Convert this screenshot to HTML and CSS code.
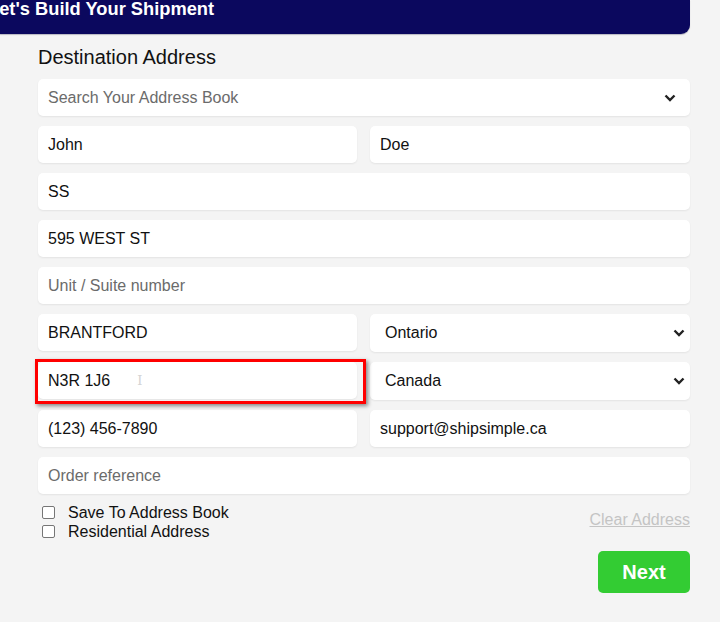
FILE: index.html
```html
<!DOCTYPE html>
<html lang="en">
<head>
    <meta charset="UTF-8">
    <title>Build Your Shipment</title>
    <link rel="stylesheet" href="styles.css">
</head>
<body>
    <div class="topbar">
        <h3 class="topbar-title">Let's Build Your Shipment</h3>
    </div>

    <form class="address-form">
        <h4 class="form-title">Destination Address</h4>

        <div class="field select-field">
            <span class="placeholder">Search Your Address Book</span>
            <svg class="chev" width="12" height="8" viewBox="0 0 12 8"><path d="M1.5 1.5 6 6l4.5-4.5" fill="none" stroke="#222" stroke-width="2.4"/></svg>
        </div>

        <div class="row">
            <div class="field">John</div>
            <div class="field">Doe</div>
        </div>
        <div class="field">SS</div>
        <div class="field">595 WEST ST</div>
        <div class="field placeholder">Unit / Suite number</div>

        <div class="row">
            <div class="field">BRANTFORD</div>
            <div class="field select-field pick">
                <span>Ontario</span>
                <svg class="chev" width="12" height="8" viewBox="0 0 12 8"><path d="M1.5 1.5 6 6l4.5-4.5" fill="none" stroke="#222" stroke-width="2.4"/></svg>
            </div>
        </div>
        <div class="row">
            <div class="field marked">N3R 1J6<span class="ibeam">I</span></div>
            <div class="field select-field pick">
                <span>Canada</span>
                <svg class="chev" width="12" height="8" viewBox="0 0 12 8"><path d="M1.5 1.5 6 6l4.5-4.5" fill="none" stroke="#222" stroke-width="2.4"/></svg>
            </div>
        </div>
        <div class="row">
            <div class="field">(123) 456-7890</div>
            <div class="field">support@shipsimple.ca</div>
        </div>
        <div class="field placeholder">Order reference</div>

        <div class="options">
            <div class="checks">
                <label class="check"><span class="box"></span>Save To Address Book</label>
                <label class="check"><span class="box"></span>Residential Address</label>
            </div>
            <a class="clear-link" href="#">Clear Address</a>
        </div>

        <div class="actions">
            <button type="button" class="next-btn">Next</button>
        </div>
    </form>
</body>
</html>
```

FILE: styles.css
```css
body, html {
    margin: 0;
    height: 100%;
    background-color: #f4f4f4;
    font-family: "Liberation Sans", Arial, sans-serif;
    color: #111;
}
.topbar {
    width: 690px;
    height: 34px;
    background-color: #0b085e;
    border-bottom-right-radius: 9px;
    box-shadow: 0 1px 1px rgba(0, 0, 40, 0.25);
    overflow: hidden;
}
.topbar-title {
    margin: 0 0 0 -12px;
    font-size: 18.3px;
    line-height: 18px;
    font-weight: bold;
    color: #fff;
    white-space: nowrap;
}
.address-form {
    width: 652px;
    margin-left: 38px;
    display: flex;
    flex-direction: column;
    gap: 10px;
}
.form-title {
    margin: 11px 0 0;
    font-size: 20px;
    line-height: 24px;
    font-weight: normal;
    color: #111;
}
.row {
    display: grid;
    grid-template-columns: 319px 320px;
    gap: 13px;
}
.field {
    box-sizing: border-box;
    height: 37px;
    padding: 0 10px;
    display: flex;
    align-items: center;
    background-color: #fff;
    border-radius: 5px;
    box-shadow: 0 1px 2px rgba(0, 0, 0, 0.07);
    font-size: 16px;
}
.placeholder {
    color: #6b6b6b;
}
.select-field {
    justify-content: space-between;
    padding-right: 14px;
}
.pick {
    height: 38px;
    padding-left: 15px;
    padding-right: 5px;
}
.chev {
    display: block;
}
.marked {
    position: relative;
}
.marked::after {
    content: "";
    position: absolute;
    left: -3px;
    top: -3px;
    right: -9px;
    bottom: -5px;
    border: 3px solid #ff0000;
    box-shadow: 2px 2px 4px rgba(0, 0, 0, 0.45);
}
.ibeam {
    margin-left: 27px;
    color: #d4d4d4;
    font-family: "DejaVu Serif", serif;
    font-size: 13px;
}
.options {
    display: flex;
    justify-content: space-between;
    align-items: flex-start;
    margin-top: -1px;
}
.checks {
    display: flex;
    flex-direction: column;
}
.check {
    display: flex;
    align-items: center;
    font-size: 16px;
    line-height: 19px;
    color: #111;
}
.box {
    box-sizing: border-box;
    width: 13px;
    height: 13px;
    margin: 0 13px 0 4px;
    border: 1px solid #767676;
    border-radius: 2px;
    background-color: #fff;
}
.clear-link {
    margin-top: 8px;
    font-size: 16px;
    color: #c4c4c4;
    text-decoration: underline;
}
.actions {
    display: flex;
    justify-content: flex-end;
}
.next-btn {
    width: 92px;
    height: 42px;
    border: none;
    border-radius: 5px;
    background-color: #33cc33;
    color: #fff;
    font-family: "Liberation Sans", Arial, sans-serif;
    font-size: 20px;
    font-weight: bold;
    cursor: pointer;
}
```
